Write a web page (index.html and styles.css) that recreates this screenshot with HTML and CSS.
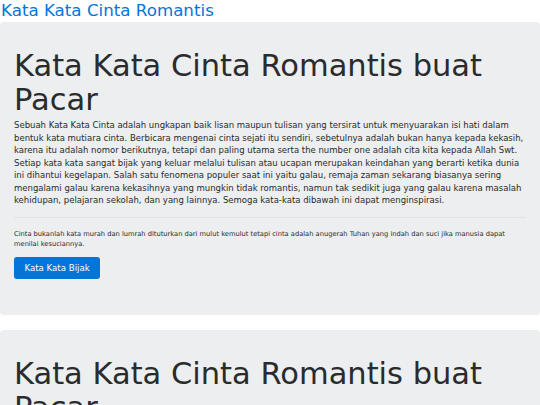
FILE: index.html
```html
<!DOCTYPE html>
<html lang="id">
<head>
    <meta charset="UTF-8">
    <meta name="viewport" content="width=device-width, initial-scale=1.0">
    <title>Kata Kata Cinta Romantis</title>
    <link rel="stylesheet" href="styles.css">
</head>
<body>
    <a class="brand" href="#">Kata Kata Cinta Romantis</a>

    <div class="jumbotron">
        <h1 class="display">Kata Kata Cinta Romantis buat Pacar</h1>
        <p class="lead">Sebuah Kata Kata Cinta adalah ungkapan baik lisan maupun tulisan yang tersirat untuk menyuarakan isi hati dalam bentuk kata mutiara cinta. Berbicara mengenai cinta sejati itu sendiri, sebetulnya adalah bukan hanya kepada kekasih, karena itu adalah nomor berikutnya, tetapi dan paling utama serta the number one adalah cita kita kepada Allah Swt. Setiap kata kata sangat bijak yang keluar melalui tulisan atau ucapan merupakan keindahan yang berarti ketika dunia ini dihantui kegelapan. Salah satu fenomena populer saat ini yaitu galau, remaja zaman sekarang biasanya sering mengalami galau karena kekasihnya yang mungkin tidak romantis, namun tak sedikit juga yang galau karena masalah kehidupan, pelajaran sekolah, dan yang lainnya. Semoga kata-kata dibawah ini dapat menginspirasi.</p>
        <hr class="divider">
        <p class="note">Cinta bukanlah kata murah dan lumrah dituturkan dari mulut kemulut tetapi cinta adalah anugerah Tuhan yang indah dan suci jika manusia dapat menilai kesuciannya.</p>
        <a class="btn" href="#">Kata Kata Bijak</a>
    </div>

    <div class="jumbotron">
        <h1 class="display">Kata Kata Cinta Romantis buat Pacar</h1>
        <p class="lead">Sebuah Kata Kata Cinta adalah ungkapan baik lisan maupun tulisan yang tersirat untuk menyuarakan isi hati dalam bentuk kata mutiara cinta.</p>
    </div>
</body>
</html>
```

FILE: styles.css
```css
body {
    margin: 0;
    font-family: "DejaVu Sans", sans-serif;
    color: #292b2c;
    background: #fff;
}
.brand {
    display: block;
    color: #0275d8;
    text-decoration: none;
    font-size: 16.7px;
    line-height: 20px;
    padding-left: 1px;
}
.jumbotron {
    background-color: #eceeef;
    border-radius: 4px;
    padding: 27px 14px 36px;
    margin: 2px 0 15px;
}
.display {
    font-size: 30.5px;
    font-weight: normal;
    line-height: 34px;
    margin: 0 0 2px;
}
.lead {
    font-size: 8.5px;
    line-height: 12.5px;
    margin: 0;
}
.divider {
    border: 0;
    border-top: 1px solid #e0e2e4;
    margin: 10px 0 11px;
}
.note {
    font-size: 6.7px;
    line-height: 10px;
    margin: 0 0 7px;
}
.btn {
    display: inline-block;
    background-color: #0275d8;
    color: #fff;
    text-decoration: none;
    font-size: 8.6px;
    line-height: 12px;
    padding: 5px 10.5px;
    border-radius: 3px;
}
```
